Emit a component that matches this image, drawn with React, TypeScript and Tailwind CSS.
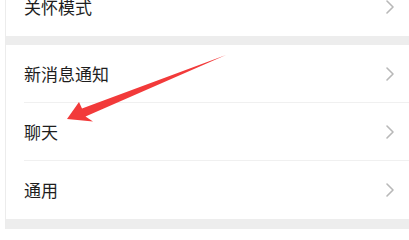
const rows = ["新消息通知", "聊天", "通用"];

function Chevron() {
  return (
    <svg width="10" height="16" viewBox="0 0 10 16" className="shrink-0">
      <path d="M2 2 L8 8 L2 14" fill="none" stroke="#b8b8b8" strokeWidth="1.6" strokeLinecap="round" strokeLinejoin="round" />
    </svg>
  );
}

function Row({ label, divider }: { label: string; divider?: boolean }) {
  return (
    <div className="pl-[18px]">
      <div className={`flex h-[58px] items-center justify-between pr-[14px] ${divider ? "border-b border-[#f0f0f0]" : ""}`}>
        <span className="text-[17px] text-[#1e1e1e]">{label}</span>
        <Chevron />
      </div>
    </div>
  );
}

export default function App() {
  return (
    <div
      className="relative h-[229px] w-[409px] overflow-hidden bg-white"
      style={{ fontFamily: '"Noto Sans CJK SC", "Noto Sans", sans-serif' }}
    >
      <div className="ml-[5px] flex h-full flex-col border-l border-[#ececec]">
        <div className="-mt-[22px] bg-white">
          <Row label="关怀模式" />
        </div>
        <div className="h-[9px] shrink-0 bg-[#ededed]" />
        <div className="bg-white">
          {rows.map((r, i) => (
            <Row key={r} label={r} divider={i < rows.length - 1} />
          ))}
        </div>
        <div className="flex-1 bg-[#ededed]" />
      </div>

      {/* red annotation arrow */}
      <svg className="pointer-events-none absolute left-0 top-0" width="409" height="229" viewBox="0 0 409 229">
        <polygon
          points="67,119 79,102 82,108.5 226,55 85.5,116.5 93,121.5"
          fill="#f23a3a"
        />
      </svg>
    </div>
  );
}
